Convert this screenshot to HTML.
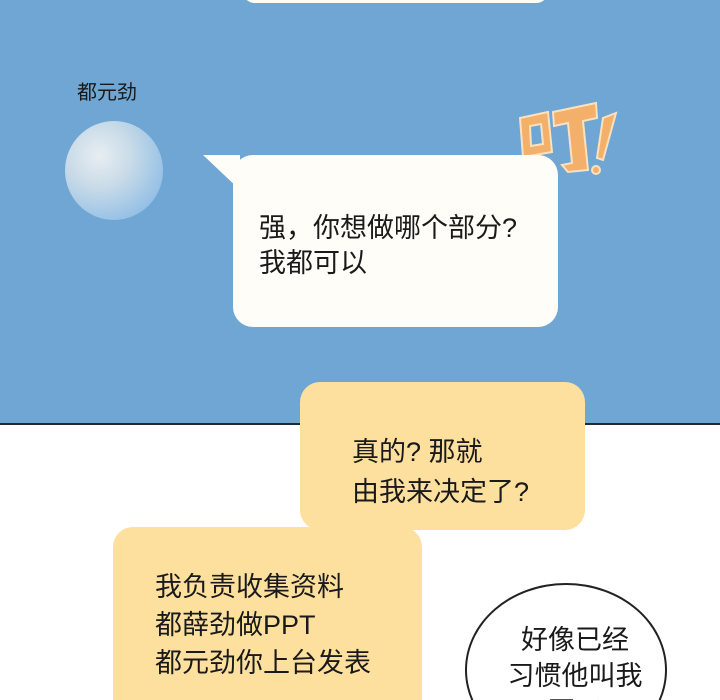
<!DOCTYPE html>
<html><head><meta charset="utf-8"><style>
html,body{margin:0;width:720px;height:700px;overflow:hidden}
body{position:relative;background:#fff;font-family:"Liberation Sans","Noto Sans CJK SC",sans-serif;color:#1a1a1a}
.blue{position:absolute;left:0;top:0;width:720px;height:423px;background:#6fa6d4;border-bottom:2px solid #1f2a33}
.b{position:absolute}
.t{position:absolute;font-size:27px;line-height:35px;white-space:nowrap}
</style></head><body>
<div class="blue"></div>
<div class="b" style="left:243px;top:-20px;width:305px;height:23px;background:#fffdf7;border-radius:14px"></div>
<div class="t" style="left:77px;top:80px;font-size:20px;line-height:26px">都元劲</div>
<div class="b" style="left:65px;top:121px;width:98px;height:99px;border-radius:50%;background:radial-gradient(circle at 35% 35%,#e8eef2 0%,#c9dbe8 35%,#9cc4e6 70%,#78b0e0 100%)"></div>
<svg class="b" style="left:0;top:0" width="720" height="423">
<path d="M203 155 L240 155 L240 190 Z" fill="#fffdf7"/>
<g fill="#f3b06a" stroke="#fde1bd" stroke-width="2">
<path d="M520 118 L548 112 L552 152 L523 157 Z M530 126 L531 146 L543 144 L541 124 Z" fill-rule="evenodd"/>
<path d="M553 112 L596 103 L597 118 L583 121 L588 170 L568 172 L562 165 L572 163 L568 123 L554 126 Z"/>
<path d="M603 118 L616 113 L603 160 L597 158 Z"/>
<circle cx="596" cy="170" r="4"/>
</g>
</svg>
<div class="b" style="left:233px;top:155px;width:325px;height:172px;background:#fffdf7;border-radius:20px"></div>
<div class="t" style="left:259px;top:211px">强，你想做哪个部分?<br>我都可以</div>
<div class="b" style="left:300px;top:382px;width:285px;height:148px;background:#fde09d;border-radius:20px"></div>
<div class="t" style="left:352px;top:432px;line-height:40px">真的? 那就<br>由我来决定了?</div>
<div class="b" style="left:113px;top:527px;width:309px;height:173px;background:#fde09d;border-radius:20px 20px 0 0"></div>
<div class="t" style="left:155px;top:568px;line-height:38px">我负责收集资料<br>都薛劲做PPT<br>都元劲你上台发表</div>
<div class="b" style="left:465px;top:583px;width:202px;height:117px;overflow:hidden"><div style="width:198px;height:170px;border:2px solid #222;border-radius:50%;background:#fff"></div></div>
<div class="t" style="left:495px;top:622px;font-size:27px;line-height:36px;text-align:center;width:160px;height:78px;overflow:hidden">好像已经<br>习惯他叫我<br>哥了</div>
</body></html>
